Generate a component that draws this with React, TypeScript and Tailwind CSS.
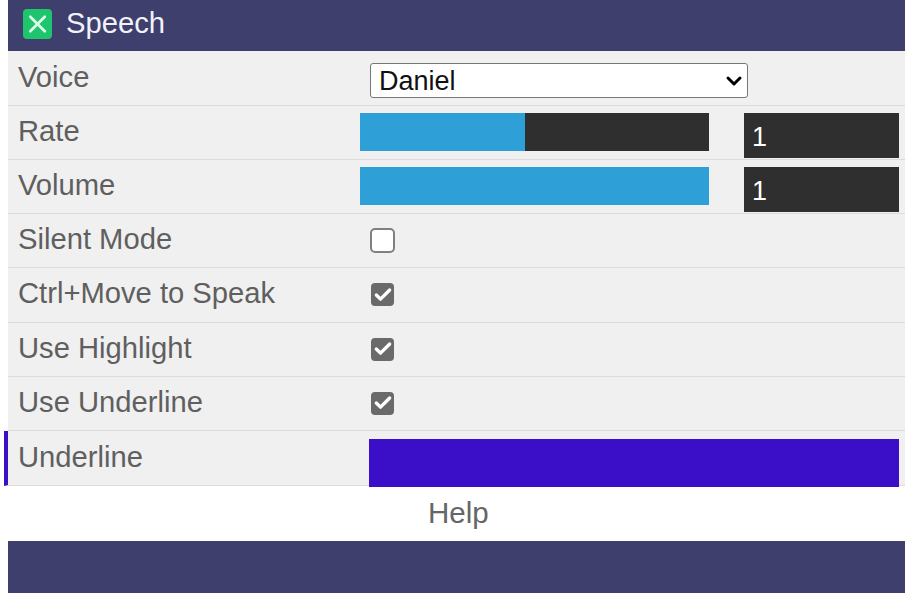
import { Check, ChevronDown, X } from "lucide-react";

const font = "font-['Liberation_Sans',Arial,sans-serif]";

function Row({ label, children, accent, tall, low }: { label: string; children?: React.ReactNode; accent?: boolean; tall?: boolean; low?: boolean }) {
  return (
    <div className={`flex border-b border-[#dcdcdc] bg-[#f0f0f0] ${tall ? "h-[55px]" : "h-[54px]"} ${accent ? "-ml-[4px] border-l-[4px] border-l-[#3b0ec8]" : ""}`}>
      <div className={`w-[352px] shrink-0 pl-[10px] text-[29.2px] leading-[40px] text-[#5f5f5f] ${low ? "pt-[6px]" : "pt-[5px]"}`}>
        {label}
      </div>
      <div className="flex min-w-0 flex-1">{children}</div>
    </div>
  );
}

function Slider({ fill }: { fill: string }) {
  return (
    <div className="flex items-start pt-[7px]">
      <div className="h-[38px] w-[349px] bg-[#2f2f2f]">
        <div className={`h-full bg-[#2f9fd8] ${fill}`} />
      </div>
      <input
        readOnly
        value="1"
        className="ml-[35px] h-[45px] w-[155px] bg-[#2f2f2f] pl-[8px] pt-[3px] text-[27px] text-white outline-none"
      />
    </div>
  );
}

function Box({ checked }: { checked?: boolean }) {
  return (
    <div className="ml-[10px] flex items-center pb-[1px]">
      {checked ? (
        <div className="ml-[1px] flex h-[23px] w-[23px] items-center justify-center rounded-[4px] bg-[#6a6a6a]">
          <Check className="h-[20px] w-[20px] text-white" strokeWidth={4} />
        </div>
      ) : (
        <div className="h-[25px] w-[25px] rounded-[5px] border-2 border-[#808080] bg-white" />
      )}
    </div>
  );
}

export default function App() {
  return (
    <div className={`h-[593px] w-[905px] overflow-hidden bg-white ${font}`}>
      <div className="ml-[8px]">
        <header className="flex h-[51px] items-center bg-[#3e3f6d] pb-[4px] pl-[15px]">
          <div className="flex h-[30px] w-[29px] items-center justify-center rounded-[4px] bg-[#1fc46f]">
            <X className="h-[30px] w-[30px] text-[#dcfbe8]" strokeWidth={2.2} />
          </div>
          <span className="ml-[14px] text-[29.2px] text-[#f2f2fa]">Speech</span>
        </header>

        <Row label="Voice" tall low>
          <div className="relative ml-[10px] mt-[12px] h-[35px] w-[378px]">
            <select className="h-full w-full appearance-none rounded-[3px] border border-[#767676] bg-white pl-[8px] text-[27px] leading-[30px] text-[#111] outline-none">
              <option>Daniel</option>
            </select>
            <ChevronDown className="pointer-events-none absolute right-[2px] top-[6px] h-[24px] w-[24px] text-black" strokeWidth={3} />
          </div>
        </Row>
        <Row label="Rate">
          <Slider fill="w-[165px]" />
        </Row>
        <Row label="Volume">
          <Slider fill="w-full" />
        </Row>
        <Row label="Silent Mode">
          <Box />
        </Row>
        <Row label="Ctrl+Move to Speak" tall>
          <Box checked />
        </Row>
        <Row label="Use Highlight">
          <Box checked />
        </Row>
        <Row label="Use Underline">
          <Box checked />
        </Row>
        <Row label="Underline" accent tall low>
          <div className="relative z-10 ml-[9px] mt-[8px] h-[48px] w-[530px] shrink-0 bg-[#3b0ec8]" />
        </Row>
      </div>

      <div className="ml-[4px] flex h-[55px] items-center bg-white pl-[424px] text-[29.5px] text-[#666666]">
        Help
      </div>
      <div className="ml-[8px] h-[52px] bg-[#3e3f6d]" />
    </div>
  );
}
